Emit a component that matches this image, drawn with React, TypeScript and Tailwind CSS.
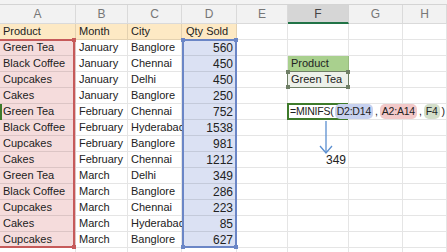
import React from "react";

const COLS = ["A", "B", "C", "D", "E", "F", "G", "H"];

const DATA: [string, string, string, string][] = [
  ["Green Tea", "January", "Banglore", "560"],
  ["Black Coffee", "January", "Chennai", "450"],
  ["Cupcakes", "January", "Delhi", "450"],
  ["Cakes", "January", "Banglore", "250"],
  ["Green Tea", "February", "Chennai", "752"],
  ["Black Coffee", "February", "Hyderabad", "1538"],
  ["Cupcakes", "February", "Banglore", "981"],
  ["Cakes", "February", "Chennai", "1212"],
  ["Green Tea", "March", "Delhi", "349"],
  ["Black Coffee", "March", "Banglore", "286"],
  ["Cupcakes", "March", "Chennai", "223"],
  ["Cakes", "March", "Hyderabad", "85"],
  ["Cupcakes", "March", "Banglore", "627"],
  ["", "", "", ""],
];

const cell = "h-4 border-r border-b border-black/10 flex items-center overflow-visible whitespace-nowrap text-[11px] text-[#222] leading-none";

function Handle({ className }: { className: string }) {
  return <div className={`absolute h-[4px] w-[4px] ${className}`} />;
}

function FCell({ row }: { row: number }) {
  if (row === 2) {
    return <div className={`${cell} bg-[#a9d08e] px-[3px] font-medium text-[#1f2a16]`}>Product</div>;
  }
  if (row === 3) {
    return (
      <div className={`${cell} relative bg-[#edf1ea] px-[3px]`}>
        <div className="absolute inset-[-1px] border border-[#6f7f66]" />
        <Handle className="-left-[2px] -top-[2px] bg-[#6f7f66]" />
        <Handle className="-right-[2px] -top-[2px] bg-[#6f7f66]" />
        <Handle className="-left-[2px] -bottom-[2px] bg-[#6f7f66]" />
        <Handle className="-right-[2px] -bottom-[2px] bg-[#6f7f66]" />
        <span className="relative">Green Tea</span>
      </div>
    );
  }
  if (row === 5) {
    return (
      <div className={`${cell} relative z-10 px-[2px]`}>
        <div className="absolute inset-[-1px] right-0 border-2 border-[#3e7a2b]" />
        <div className="relative flex items-center text-[10.5px] tracking-[-0.2px] text-[#222]">
          <span>=MINIFS(</span>
          <span className="ml-[1px] rounded-[5px] bg-[#c7d1ef] px-[2px] py-[2px]">D2:D14</span>
          <span className="mx-[2px]">,</span>
          <span className="rounded-[5px] bg-[#f2c9c9] px-[2px] py-[2px]">A2:A14</span>
          <span className="mx-[2px]">,</span>
          <span className="rounded-[5px] bg-[#d3dec9] px-[2px] py-[2px]">F4</span>
          <span className="ml-[2px]">)</span>
        </div>
      </div>
    );
  }
  if (row === 8) {
    return <div className={`${cell} justify-end pr-[2px] text-[12px]`}>349</div>;
  }
  return <div className={cell} />;
}

export default function App() {
  return (
    <div className="relative h-[252px] w-[447px] overflow-hidden bg-white font-['Liberation_Sans',Arial,sans-serif]">
      <div className="h-[5px] border-b border-[#d4d4d4] bg-[#f3f3f3]" />
      <div className="grid grid-cols-[76px_52px_54px_55px_51px_61px_54px_44px]">
        {COLS.map((c) => (
          <div
            key={c}
            className={`flex h-[19px] items-center justify-center border-r border-b text-[12px] ${
              c === "F"
                ? "border-b-2 border-r-[#d4d4d4] border-b-[#217346] bg-[#d6d6d6] text-[#444]"
                : "border-[#dadada] bg-[#f2f2f2] text-[#777]"
            }`}
          >
            {c}
          </div>
        ))}

        <div className={`${cell} bg-[#fde9c4] px-[3px]`}>Product</div>
        <div className={`${cell} bg-[#fde9c4] px-[3px]`}>Month</div>
        <div className={`${cell} bg-[#fde9c4] px-[3px]`}>City</div>
        <div className={`${cell} bg-[#fde9c4] px-[4px]`}>Qty Sold</div>
        <div className={cell} />
        <FCell row={0} />
        <div className={cell} />
        <div className={cell} />

        {DATA.map((r, i) => (
          <React.Fragment key={i}>
            <div className={`${cell} px-[3px] ${i < 13 ? "bg-[#f5dcdc]" : ""}`}>{r[0]}</div>
            <div className={`${cell} px-[3px]`}>{r[1]}</div>
            <div className={`${cell} overflow-hidden px-[3px]`}>{r[2]}</div>
            <div className={`${cell} justify-end pr-[3px] text-[12px] ${i < 13 ? "bg-[#dbe1f3]" : ""}`}>{r[3]}</div>
            <div className={cell} />
            <FCell row={i + 1} />
            <div className={cell} />
            <div className={cell} />
          </React.Fragment>
        ))}
      </div>

      {/* row marker for active cell */}
      <div className="absolute left-0 top-[104px] h-4 w-[2px] bg-[#3e7a2b]" />

      {/* A2:A14 range */}
      <div className="pointer-events-none absolute left-[-2px] top-[39px] h-[209px] w-[77px] border-2 border-[#c65a5a]">
        <Handle className="-right-[3px] -top-[3px] bg-[#c65a5a]" />
        <Handle className="-right-[3px] -bottom-[3px] bg-[#c65a5a]" />
      </div>

      {/* D2:D14 range */}
      <div className="pointer-events-none absolute left-[182px] top-[39px] h-[209px] w-[55px] border-2 border-[#6b86c6]">
        <Handle className="-left-[3px] -top-[3px] bg-[#6b86c6]" />
        <Handle className="-right-[3px] -top-[3px] bg-[#6b86c6]" />
        <Handle className="-left-[3px] -bottom-[3px] bg-[#6b86c6]" />
        <Handle className="-right-[3px] -bottom-[3px] bg-[#6b86c6]" />
      </div>

      {/* arrow */}
      <svg className="pointer-events-none absolute left-[318px] top-[120px]" width="16" height="36" viewBox="0 0 16 36">
        <path d="M8 1 V33" stroke="#5b8fd0" strokeWidth="1.3" fill="none" />
        <path d="M2 26 L8 33 L14 26" stroke="#5b8fd0" strokeWidth="1.3" fill="none" />
      </svg>
    </div>
  );
}
